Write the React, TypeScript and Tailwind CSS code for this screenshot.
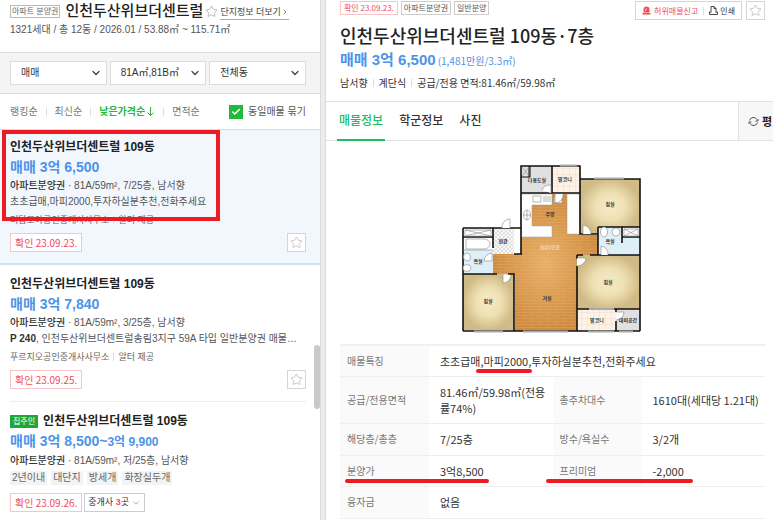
import React from 'react';
import { Check, ChevronDown, ChevronRight, Star } from 'lucide-react';

function FilterSelect({ label, options }: { label: string; options: string[] }) {
  return (
    <div className="relative flex-1">
      <select
        aria-label={label}
        className="block h-6 w-full appearance-none border border-[#dcdcdc] bg-white px-[10px] text-[10px] leading-[22px] text-[#333]"
      >
        {options.map((o) => (
          <option key={o}>{o}</option>
        ))}
      </select>
      <ChevronDown size={12} strokeWidth={2.5} className="pointer-events-none absolute top-[6px] right-[5px] text-[#444]" />
    </div>
  );
}

function Confirmed({ date }: { date: string }) {
  return (
    <span className="flex h-[19px] items-center border border-[#f9c3c8] bg-white px-1 text-[10px] leading-4 whitespace-nowrap text-[#f34c59] [font-family:'Noto_Sans_CJK_KR',sans-serif]">
      확인 {date}
    </span>
  );
}

function StarButton({ name }: { name: string }) {
  return (
    <button type="button" aria-label={name} className="flex size-[19px] shrink-0 items-center justify-center border border-[#d5d5d5] bg-white text-[#bbb]">
      <Star size={13} strokeWidth={1.5} />
    </button>
  );
}

function Divider() {
  return <span className="h-2 w-px bg-[#ddd]" />;
}

type ListingProps = {
  price: string;
  to?: string;
  floor: string;
  owner?: boolean;
  children: React.ReactNode;
};

function Listing({ price, to, floor, owner, children }: ListingProps) {
  return (
    <>
      <h2 className="flex items-center gap-[5px] text-[12px] leading-5 font-bold whitespace-nowrap text-[#222]">
        {owner && <span className="bg-[#1fa838] px-[3px] text-[8px] leading-[13px] font-normal text-white">집주인</span>}
        인천두산위브더센트럴 109동
      </h2>
      <p className="text-[14px] leading-5 font-bold text-[#4c94e8]">
        매매 {price}
        {to && <span className="text-[12px]">{to}</span>}
      </p>
      <p className="text-[10px] leading-[18px] text-[#555]">
        <b className="font-medium text-[#333]">아파트분양권</b> · 81A/59m², {floor}, 남서향
      </p>
      {children}
    </>
  );
}

function Agent({ name }: { name: string }) {
  return (
    <p className="mt-[3px] flex items-center gap-1 text-[9px] leading-4 text-[#666]">
      {name}
      <Divider />
      알터 제공
    </p>
  );
}

function Sidebar() {
  const sorts = ['랭킹순', '최신순', '낮은가격순', '면적순'];
  return (
    <aside className="relative w-[321px] shrink-0 border-r border-[#dcdcdc] bg-white [font-family:'Liberation_Sans','Noto_Sans_CJK_KR',sans-serif]">
      <header className="h-[52px] px-[10px] pt-px">
        <div className="flex h-5 items-center whitespace-nowrap">
          <span className="border border-[#bbb] px-px text-[8px] leading-[11px] text-[#666]">아파트 분양권</span>
          <h1 className="ml-[5px] text-[15px] leading-5 font-medium text-[#222]">인천두산위브더센트럴</h1>
          <Star size={13} strokeWidth={1.5} className="mx-[2px] shrink-0 text-[#aaa]" />
          <a href="#complex" className="mt-[3px] flex items-center border-b border-[#aaa] text-[9px] leading-[13px] text-[#444]">
            단지정보 더보기
            <ChevronRight size={8} />
          </a>
        </div>
        <p className="text-[10px] leading-[18px] text-[#555]">1321세대 / 총 12동 / 2026.01 / 53.88㎡ ~ 115.71㎡</p>
      </header>

      <div className="flex gap-[3px] border-y border-[#dedede] bg-[#f4f4f4] py-2 pr-[14px] pl-[10px]">
        <FilterSelect label="거래 유형" options={['매매', '전세', '월세']} />
        <FilterSelect label="면적" options={['81A㎡,81B㎡']} />
        <FilterSelect label="동" options={['전체동', '109동']} />
      </div>

      <div className="flex h-[36px] items-center justify-between border-b border-[#d3dde6] pr-[14px] pl-[10px] text-[10px] text-[#777]">
        <div className="flex items-center gap-2">
          {sorts.map((s, i) => (
            <React.Fragment key={s}>
              {i > 0 && <Divider />}
              <button type="button" className={s === '낮은가격순' ? 'flex items-center font-bold text-[#1dbb38]' : ''}>
                {s}
                {s === '낮은가격순' && (
                  <svg width="9" height="11" viewBox="0 0 9 11" fill="none" stroke="currentColor" className="ml-px">
                    <path d="M4.5 1v8.500M1.500 6.500l3 3 3-3" />
                  </svg>
                )}
              </button>
            </React.Fragment>
          ))}
        </div>
        <label className="flex items-center gap-[5px] text-[#555]">
          <span className="relative flex size-[14px]">
            <input type="checkbox" defaultChecked className="size-[14px] appearance-none bg-[#24b840]" />
            <Check size={10} strokeWidth={3.5} className="pointer-events-none absolute top-[2px] left-[2px] text-white" />
          </span>
          동일매물 묶기
        </label>
      </div>

      <ul>
        <li className="relative border-b-2 border-[#cfe0f2] bg-[#f2f7fe] pt-[7px] pr-[14px] pb-[11px] pl-[10px]">
          <Listing price="3억 6,500" floor="7/25층">
            <p className="text-[10px] leading-[14px] text-[#555]">초초급매,마피2000,투자하실분추천,전화주세요</p>
          </Listing>
          <Agent name="더탑모아공인중개사사무소" />
          <div className="mt-[5px] flex justify-between">
            <Confirmed date="23.09.23." />
            <StarButton name="관심매물" />
          </div>
          <span className="absolute top-0 left-[2px] h-[91px] w-[218px] border-4 border-[#ed1c24]" />
        </li>
        <li className="mr-[14px] ml-[10px] border-b border-[#ececec] pt-[9px] pb-3">
          <Listing price="3억 7,840" floor="3/25층">
            <p className="text-[10px] leading-[14px] whitespace-nowrap text-[#555]">
              <b className="text-[#333]">P 240</b>, 인천두산위브더센트럴송림3지구 59A 타입 일반분양권 매물…
            </p>
          </Listing>
          <Agent name="푸르지오공인중개사사무소" />
          <div className="mt-[5px] flex justify-between">
            <Confirmed date="23.09.25." />
            <StarButton name="관심매물" />
          </div>
        </li>
        <li className="mr-[14px] ml-[10px] pt-[9px]">
          <Listing price="3억 8,500~" to="3억 9,900" floor="저/25층" owner>
            <div className="mt-px flex gap-1 text-[10px] leading-[14px] text-[#666]">
              {['2년이내', '대단지', '방세개', '화장실두개'].map((t) => (
                <span key={t} className="bg-[#f3f3f3] px-[2px]">{t}</span>
              ))}
            </div>
          </Listing>
          <div className="mt-2 flex gap-[2px]">
            <Confirmed date="23.09.26." />
            <button type="button" className="flex h-[19px] items-center border border-[#ccc] px-[3px] text-[9px] text-[#333]">
              중개사&nbsp;<b className="text-[#f34c59]">3</b>곳
              <ChevronDown size={10} strokeWidth={1.5} className="ml-[2px] text-[#777]" />
            </button>
          </div>
        </li>
      </ul>
      <span className="absolute top-[345px] right-0 h-16 w-[6px] rounded-full bg-[#c9c9c9]" />
    </aside>
  );
}

function FloorPlan() {
  const room = (x: number, y: number, t: string) => (
    <text x={x} y={y} fontSize="5" textAnchor="middle" fill="#333" fontWeight="bold">{t}</text>
  );
  return (
    <svg
      viewBox="462 164 181 169"
      width="181"
      height="169"
      role="img"
      aria-label="평면도"
      className="[font-family:'Noto_Sans_CJK_KR',sans-serif]"
    >
      <defs>
        <radialGradient id="bed">
          <stop offset="0" stopColor="#f7ebc6" />
          <stop offset="0.5" stopColor="#efe0b4" />
          <stop offset="1" stopColor="#d0bb86" />
        </radialGradient>
        <radialGradient id="glow">
          <stop offset="0" stopColor="#e9b06a" />
          <stop offset="1" stopColor="#cf8c40" />
        </radialGradient>
        <pattern id="wood" width="16" height="6" patternUnits="userSpaceOnUse">
          <path d="M0 .5h16M0 3.5h16M5 0v3M13 3v3" stroke="#f0bd7c" strokeWidth=".6" opacity=".35" />
        </pattern>
        <pattern id="tile" width="6" height="6" patternUnits="userSpaceOnUse">
          <rect width="6" height="6" fill="#fcf2e6" />
          <path d="M0 0h6M0 0v6" stroke="#ead9c8" strokeWidth=".8" />
        </pattern>
        <pattern id="check" width="4" height="4" patternUnits="userSpaceOnUse">
          <rect width="4" height="4" fill="#f8f8f8" />
          <path d="M0 0h2v2h-2zM2 2h2v2h-2z" fill="#e0e0e0" />
        </pattern>
      </defs>
      {/* Living room and kitchen floor */}
      <path d="M522 194h59v41h18v20h-21v76h-62v-57h-22v-20h28z" fill="url(#glow)" />
      <path d="M522 194h59v41h18v20h-21v76h-62v-57h-22v-20h28z" fill="url(#wood)" />
      {/* Utility rooms */}
      <path d="M522 166h31v27h-31zM617 309h24v22h-24z" fill="#e0e0e0" />
      <path d="M553 166h28v27h-28zM578 309h39v22h-39z" fill="url(#tile)" />
      {/* Kitchen units */}
      <path d="M522 194h31v11h-20v21h20v11h-31zM568 194h13v40h-13z" fill="#fff" stroke="#999" strokeWidth=".5" />
      {/* Bedrooms */}
      <path d="M581 179h60v48h-42v7h-18z" fill="url(#bed)" />
      <path d="M578 255h63v54h-63z" fill="url(#bed)" />
      <path d="M464 274h51v56h-51z" fill="url(#bed)" />
      {/* Bathrooms and entrance */}
      <path d="M599 227h42v28h-42zM464 250h30v24h-30z" fill="#dfeff7" />
      <path d="M464 229h30v21h-30zM515 228h7v26h-7zM623 228h18v9h-18z" fill="#fff" />
      <path d="M494 229h21v25h-21z" fill="url(#check)" />
      {/* Walls */}
      <g fill="none" stroke="#111" strokeWidth="1.6">
        <path d="M522 254V166h59v68h18v-7M522 193h31v-27M553 193h28M464 228h58M464 228v103M464 237h30M494 228v20M464 274h34M509 274h6v57M515 254h8M581 179h60v152M599 227h42M599 234v21M623 227v16M623 237h18M578 255h6M591 255h50M578 255v4M578 266v65M578 309h63M617 309v3M617 321v10M464 331h177" />
        <path d="M531 166v11h-9M530 166v11" strokeWidth="1" />
      </g>
      {/* Windows */}
      <path d="M561 165.500h17M595 178.500h30M475 331.500h29M524 331.500h45M589 331.500h26M590 309h25M620 331.500h14" stroke="#a9a9a9" strokeWidth="2.200" />
      {/* Fixtures */}
      <g fill="#fff" stroke="#888" strokeWidth=".6">
        <path d="M523 167l7 9M530 167l-7 9M466 230h26v6h-26zM466 230l26 6M492 230l-26 6M625 229h14v7h-14zM625 229l14 7M639 229l-14 7" />
        <path d="M467 239h18a6 5 0 0 1 0 10h-18zM464 250h30" />
        <path d="M534 196h8v6h-8zM544 197h8M544 199h8M544 201h8M555 197h8v6h-8z" />
        <ellipse cx="528" cy="215" rx="3.500" ry="5" />
        <path d="M525 215h7M528 210v10" />
        <ellipse cx="468" cy="257" rx="3.500" ry="4" />
        <ellipse cx="468" cy="268" rx="4" ry="3.500" />
        <ellipse cx="605" cy="232" rx="3.500" ry="5" />
        <circle cx="617" cy="232" r="4" />
        <path d="M552 193v-8a9 8 0 0 0-9 5M556 194v9a8 8 0 0 0 8-9M511 228v-9a8 8 0 0 0-8 9M584 234v-9a9 9 0 0 1 8 9M493 261v-8a9 8 0 0 0-8 8zM504 274v9a8 8 0 0 0 8-8M578 258h9a9 9 0 0 1-9 8M602 255v-9a8 8 0 0 1 7 9M617 312h8a8 8 0 0 1-8 8" />
      </g>
      {room(538, 182, '다용도실')}
      {room(566, 181, '발코니')}
      {room(551, 216, '주방')}
      {room(611, 206, '침실')}
      {room(504, 243, '현관')}
      {room(479, 263, '욕실')}
      {room(611, 243, '욕실')}
      {room(489, 303, '침실')}
      {room(548, 300, '거실')}
      {room(609, 284, '침실')}
      {room(598, 322, '발코니')}
      {room(629, 322, '대피공간')}
      <text x="551" y="250" fontSize="6" textAnchor="middle" fill="#fff" opacity=".45" fontWeight="bold">NAVER</text>
    </svg>
  );
}

function Th({ children }: { children: React.ReactNode }) {
  return <th scope="row" className="w-[89px] bg-[#fafafa] px-[7px] text-left text-[10px] font-normal text-[#777]">{children}</th>;
}

function Td({ children, span }: { children?: React.ReactNode; span?: number }) {
  return <td colSpan={span} className="relative pl-[11px] whitespace-nowrap">{children}</td>;
}

function Detail() {
  return (
    <main className="min-w-0 flex-1 border-l border-[#dcdcdc] bg-white [font-family:'Noto_Sans_CJK_KR',sans-serif]">
      <header className="border-b border-[#e2e2e2] pt-px pr-2 pb-2 pl-[14px]">
        <div className="flex h-5 items-start justify-between whitespace-nowrap">
          <div className="flex gap-[3px] text-[8px] leading-[12px] text-[#555]">
            <span className="border border-[#f9c3c8] px-[3px] text-[#f34c59]">확인 23.09.23.</span>
            <span className="border border-[#ccc] px-[2px]">아파트분양권</span>
            <span className="border border-[#ccc] px-[2px]">일반분양</span>
          </div>
          <div className="flex gap-1">
            <div className="flex h-[19px] items-center gap-[5px] border border-[#d5d5d5] px-[6px] text-[8px]">
              <button type="button" className="flex items-center gap-[3px] text-[#f34c59]">
                <svg width="9" height="9" viewBox="0 0 9 9" fill="currentColor">
                  <path d="M1.500 6.500V3.500a3 3 0 0 1 6 0v3zM.5 7h8v1.500h-8z" />
                  <path d="M3.500 5V3.500L5 2.500" fill="none" stroke="#fff" strokeWidth=".7" />
                </svg>
                허위매물신고
              </button>
              <Divider />
              <button type="button" className="flex items-center gap-[2px] text-[#333]">
                <svg width="9" height="9" viewBox="0 0 9 9" fill="none" stroke="currentColor">
                  <path d="M2 6.500V.5h3L7 2.500V6.500M5 .5v2h2M2 6H.5v2.500h8V6H7" strokeWidth=".9" />
                </svg>
                인쇄
              </button>
            </div>
            <StarButton name="관심매물 등록" />
          </div>
        </div>
        <h1 className="text-[18px] leading-7 font-medium whitespace-nowrap text-[#222]">인천두산위브더센트럴 109동·7층</h1>
        <p className="flex items-baseline gap-[2px] text-[15px] leading-[22px] whitespace-nowrap text-[#4c94e8]">
          <b className="[font-family:'Liberation_Sans','Noto_Sans_CJK_KR',sans-serif]">매매 3억 6,500</b>
          <span className="text-[10px]">(1,481만원/3.3㎡)</span>
        </p>
        <p className="mt-px flex items-center gap-[5px] text-[10px] leading-5 whitespace-nowrap text-[#333]">
          남서향
          <Divider />
          계단식
          <Divider />
          공급/전용 면적:81.46㎡/59.98㎡
        </p>
      </header>

      <nav className="flex h-[39px] justify-between border-b border-[#e2e2e2] pl-[11px] text-[12px] text-[#333]">
        <div className="flex gap-3">
          <button type="button" className="-mb-px border-b-2 border-[#1dbd60] px-[2px] pb-[2px] font-medium text-[#1dbd60]">매물정보</button>
          <button type="button" className="px-[2px] pb-[3px] font-medium">학군정보</button>
          <button type="button" className="px-[2px] pb-[3px] font-medium">사진</button>
        </div>
        <button type="button" className="flex w-[35px] items-center gap-[3px] overflow-hidden border-l border-[#e2e2e2] bg-[#f7f7f7] pl-[9px] text-[11px] font-bold text-[#222]">
          <svg width="11" height="11" viewBox="0 0 11 11" fill="none" stroke="#555" className="shrink-0">
            <path d="M1.500 4.500a4 4 0 0 1 7.500-.8M9.500 6.500A4 4 0 0 1 2 7.300M7.500 5h2.500V3M3.500 6H1v2" />
          </svg>
          평
        </button>
      </nav>

      <div className="mt-[23px] flex justify-center pl-1">
        <FloorPlan />
      </div>

      <div className="mt-[11px] pr-2 pl-[14px]">
        <table className="w-full table-fixed border-t-2 border-[#f0f0f0] text-[11px] leading-4 text-[#333]">
          <colgroup>
            <col className="w-[89px]" />
            <col />
            <col className="w-[89px]" />
            <col />
          </colgroup>
          <tbody>
            <tr className="h-[31px] border-b border-[#eee]">
              <Th>매물특징</Th>
              <Td span={3}>
                초초급매,마피2000,투자하실분추천,전화주세요
                <span className="absolute bottom-[3px] left-[47px] h-1 w-14 rounded-full bg-[#ed1c24]" />
              </Td>
            </tr>
            <tr className="h-[47px] border-b border-[#eee]">
              <Th>공급/전용면적</Th>
              <Td>81.46㎡/59.98㎡(전용<br />률74%)</Td>
              <Th>총주차대수</Th>
              <Td>1610대(세대당 1.21대)</Td>
            </tr>
            <tr className="h-[32px] border-b border-[#eee]">
              <Th>해당층/총층</Th>
              <Td>7/25층</Td>
              <Th>방수/욕실수</Th>
              <Td>3/2개</Td>
            </tr>
            <tr className="h-[31px] border-b border-[#eee]">
              <Th>분양가</Th>
              <Td>
                3억8,500
                <span className="absolute bottom-[3px] -left-[84px] h-1 w-36 rounded-full bg-[#ed1c24]" />
              </Td>
              <Th>프리미엄</Th>
              <Td>
                -2,000
                <span className="absolute bottom-[3px] -left-24 h-1 w-[147px] rounded-full bg-[#ed1c24]" />
              </Td>
            </tr>
            <tr className="h-[32px] border-b border-[#eee]">
              <Th>융자금</Th>
              <Td span={3}>없음</Td>
            </tr>
          </tbody>
        </table>
      </div>
    </main>
  );
}

export default function App() {
  return (
    <div className="flex min-h-screen gap-1 overflow-hidden bg-[#ececec]">
      <Sidebar />
      <Detail />
    </div>
  );
}
